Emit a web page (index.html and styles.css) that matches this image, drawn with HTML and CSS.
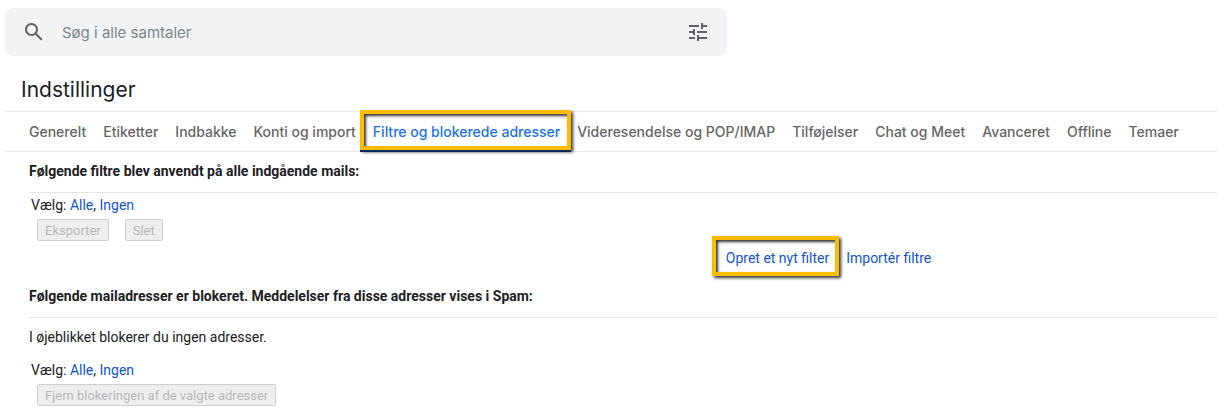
FILE: index.html
```
<!DOCTYPE html>
<html lang="da">
<head>
  <meta charset="utf-8">
  <meta name="viewport" content="width=device-width, initial-scale=1">
  <title>Indstillinger</title>
  <link rel="stylesheet" href="styles.css">
</head>
<body>
  <form class="search" role="search">
    <button type="button" class="icon-btn" aria-label="Søg">
      <svg viewBox="0 0 24 24" width="24" height="24"><path d="M20.49 19l-5.73-5.73C15.53 12.2 16 10.91 16 9.5 16 5.91 13.09 3 9.5 3S3 5.91 3 9.5 5.91 16 9.5 16c1.41 0 2.7-.47 3.77-1.24L19 20.49 20.49 19zM5 9.5C5 7.01 7.01 5 9.5 5S14 7.01 14 9.5 11.99 14 9.5 14 5 11.99 5 9.5z"/></svg>
    </button>
    <input type="text" class="search-input" placeholder="Søg i alle samtaler" aria-label="Søg i alle samtaler">
    <button type="button" class="icon-btn" aria-label="Søgeindstillinger">
      <svg viewBox="0 0 24 24" width="24" height="24"><path d="M3 17v2h6v-2H3zM3 5v2h10V5H3zm10 16v-2h8v-2h-8v-2h-2v6h2zM7 9v2H3v2h4v2h2V9H7zm14 4v-2H11v2h10zm-6-4h2V7h4V5h-4V3h-2v6z"/></svg>
    </button>
  </form>

  <main class="settings">
    <h1>Indstillinger</h1>

    <nav class="tabs">
      <a class="tab" href="#generelt">Generelt</a>
      <a class="tab" href="#etiketter">Etiketter</a>
      <a class="tab" href="#indbakke">Indbakke</a>
      <a class="tab" href="#konti">Konti og import</a>
      <a class="tab active" href="#filtre">Filtre og blokerede adresser</a>
      <a class="tab" href="#videresendelse">Videresendelse og POP/IMAP</a>
      <a class="tab" href="#tilfojelser">Tilføjelser</a>
      <a class="tab" href="#chat">Chat og Meet</a>
      <a class="tab" href="#avanceret">Avanceret</a>
      <a class="tab" href="#offline">Offline</a>
      <a class="tab" href="#temaer">Temaer</a>
    </nav>

    <section class="section">
      <h2>Følgende filtre blev anvendt på alle indgående mails:</h2>
      <p class="select-row">Vælg: <a href="#alle">Alle</a>, <a href="#ingen">Ingen</a></p>
      <div class="buttons">
        <button type="button" class="button" disabled>Eksporter</button>
        <button type="button" class="button" disabled>Slet</button>
      </div>
      <div class="filter-links">
        <a class="create-filter" href="#opret">Opret et nyt filter</a>
        <a href="#importer">Importér filtre</a>
      </div>
    </section>

    <section class="section">
      <h2>Følgende mailadresser er blokeret. Meddelelser fra disse adresser vises i Spam:</h2>
      <p class="empty">I øjeblikket blokerer du ingen adresser.</p>
      <p class="select-row">Vælg: <a href="#alle-adresser">Alle</a>, <a href="#ingen-adresser">Ingen</a></p>
      <div class="buttons">
        <button type="button" class="button" disabled>Fjern blokeringen af de valgte adresser</button>
      </div>
    </section>
  </main>
</body>
</html>
```
FILE: styles.css
```
* {
  box-sizing: border-box;
}

body {
  margin: 0;
  padding: 8px 0 8px 5px;
  font-family: Roboto, Arial, sans-serif;
  font-size: 14px;
  line-height: 20px;
  color: #202124;
  background: #fff;
}

a {
  color: #15c;
  text-decoration: none;
}

.search {
  display: flex;
  align-items: center;
  gap: 16px;
  max-width: 722px;
  height: 48px;
  padding: 0 17px;
  background: #f1f3f4;
  border-radius: 8px;
}

.icon-btn {
  display: flex;
  padding: 0;
  border: none;
  background: none;
  cursor: pointer;
}

.icon-btn svg {
  fill: #5f6368;
}

.search-input {
  flex: 1;
  min-width: 0;
  padding: 0;
  border: none;
  outline: none;
  background: none;
  font-family: Inter, sans-serif;
  font-size: 15px;
  color: #202124;
}

.search-input::placeholder {
  color: #80868b;
}

h1 {
  margin: 0;
  padding: 21px 16px 9px;
  font-family: Inter, sans-serif;
  font-size: 21px;
  font-weight: 400;
  line-height: 25px;
}

.tabs {
  display: flex;
  gap: 1px;
  height: 41px;
  padding: 0 16px;
  border-top: 1px solid #e8eaed;
  border-bottom: 1px solid #e8eaed;
}

.tab {
  padding: 0 8px;
  font-family: Inter, sans-serif;
  font-size: 14px;
  font-weight: 500;
  line-height: 39px;
  color: #666;
  white-space: nowrap;
}

.tab.active {
  position: relative;
  color: #1a73e8;
}

/* yellow callout frames */
.tab.active::after,
.create-filter::after {
  content: "";
  position: absolute;
  border: 4px solid #fbbc04;
  box-shadow: 2px 2px 3px rgba(0, 0, 0, 0.8), inset 2px 2px 3px rgba(0, 0, 0, 0.8);
  pointer-events: none;
}

.tab.active::after {
  inset: -2px -3px 1px -5px;
  box-shadow: 0 2px 0 #0b2a5c, 2px 2px 3px rgba(0, 0, 0, 0.8), inset 2px 2px 3px rgba(0, 0, 0, 0.8);
}

.section {
  padding-left: 24px;
}

.section h2 {
  margin: 0;
  padding: 9px 0 11px;
  font-size: 14px;
  font-weight: 700;
  border-bottom: 1px solid #e5e5e5;
}

.select-row {
  margin: 0;
  padding: 2px 2px 4px;
}

.buttons {
  display: flex;
  gap: 16px;
  padding-left: 8px;
}

.button {
  height: 22px;
  padding: 0 7px;
  font-family: inherit;
  font-size: 13px;
  color: #b8b8b8;
  background: #eee;
  border: 1px solid #d0d0d0;
  border-radius: 2px;
}

.filter-links {
  display: flex;
  gap: 17px;
  padding: 7px 0 9px calc(60% - 16px);
}

.create-filter {
  position: relative;
}

.create-filter::after {
  inset: -12px -10px -8px -14px;
}

.empty {
  margin: 0;
  padding: 9px 0 11px;
}
```
